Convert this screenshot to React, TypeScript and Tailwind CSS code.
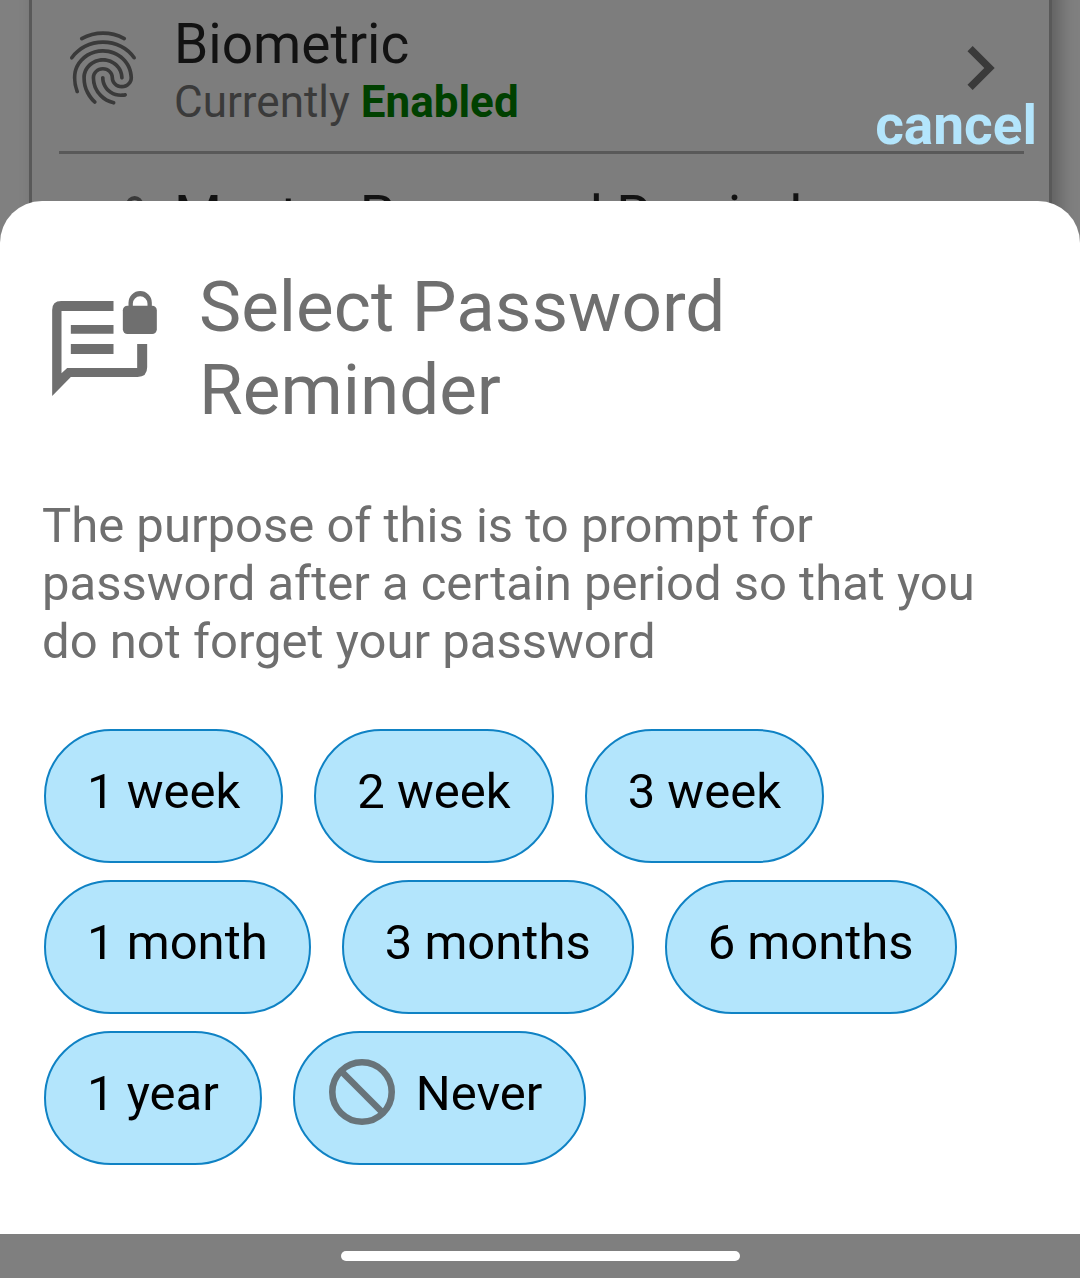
import type { ReactNode } from "react";
import { MdChevronRight, MdFingerprint } from "react-icons/md";

function ChatLockIcon({ className }: { className: string }) {
  return (
    <svg viewBox="65 63 314 315" className={className} fill="currentColor" aria-hidden="true">
      <path d="M65 378V120Q65 93 92 93H249V123H93V310L110 294H320V222H350V292Q350 321 321 321H121Z" />
      <path d="M121 165H249V191H121ZM121 222H249V252H121Z" />
      <rect x="277" y="107" width="102" height="85" rx="14" />
      <path d="M294 110V98A35 35 0 0 1 364 98V110H351V101A22 22 0 0 0 307 101V110Z" />
    </svg>
  );
}

function BanIcon() {
  return (
    <svg viewBox="0 0 20 20" className="mb-1 size-[66px] text-[#68747a]" fill="none" stroke="currentColor" strokeWidth="2" aria-hidden="true">
      <circle cx="10" cy="10" r="9" />
      <path d="M3.8 3.8 16.2 16.2" />
    </svg>
  );
}

function SettingRow({ icon, title, children }: { icon: ReactNode; title: string; children?: ReactNode }) {
  return (
    <div className="flex h-[172px] items-start pr-[25px] pl-[27px] pt-3 text-[#3a3a3a]">
      <div className="flex w-[115px] shrink-0 pt-3">{icon}</div>
      <div className="grow">
        <div className="text-[55px] leading-[64px] whitespace-nowrap text-[#121212]">{title}</div>
        {children}
      </div>
      <MdChevronRight className="mt-3 size-[88px] shrink-0" />
    </div>
  );
}

function Chip({ icon, label }: { icon?: ReactNode; label: string }) {
  return (
    <button
      type="button"
      className={
        "flex h-[134px] items-center rounded-full border-2 border-[#0f82c4] bg-[#b3e5fc] pb-2 text-[49px] leading-[58px] text-black " +
        (icon ? "gap-[21px] pl-[34px] pr-[42px]" : "px-[41px]")
      }
    >
      {icon}
      {label}
    </button>
  );
}

const rows = [["1 week", "2 week", "3 week"], ["1 month", "3 months", "6 months"], ["1 year", "Never"]];

export default function App() {
  return (
    <div className="relative min-h-screen overflow-hidden bg-[#808080] font-['Roboto',sans-serif]">
      <div className="absolute inset-x-0 -top-10 bottom-0 pr-7 pl-[29px]" aria-hidden="true">
        <div className="h-full border-x-[3px] border-[#595959] bg-[#7d7d7d] pt-10 shadow-[8px_0_16px_0_rgba(0,0,0,0.25)]">
          <SettingRow icon={<MdFingerprint className="size-[88px]" />} title="Biometric">
            <div className="text-[44px] leading-[52px]">
              Currently <b className="font-bold text-[#004000]">Enabled</b>
            </div>
          </SettingRow>
          <hr className="-mt-[21px] mr-[25px] mb-[18px] ml-[27px] border-t-[3px] border-[#595959]" />
          <SettingRow icon={<ChatLockIcon className="ml-[11px] size-[77px]" />} title="Master Password Reminder" />
        </div>
      </div>

      <div className="relative flex min-h-screen flex-col justify-end">
        <div className="flex justify-end px-[43px] pb-11">
          <button type="button" className="text-[55px] leading-[64px] font-bold text-[#b3e5fc]">
            cancel
          </button>
        </div>
        <section className="rounded-t-[42px] bg-white px-[42px] pt-16 pb-[69px] text-[#6f6f6f]">
          <div className="flex items-start gap-[42px]">
            <ChatLockIcon className="mt-[26px] ml-[10px] size-[105px] shrink-0" />
            <h1 className="max-w-[640px] text-[71px] leading-[83px]">Select Password Reminder</h1>
          </div>
          <p className="mt-[66px] text-[49px] leading-[58px]">
            The purpose of this is to prompt for password after a certain period so that you do not forget your password
          </p>
          <div className="mt-[58px] ml-[2px] flex flex-col gap-[17px]">
            {rows.map((row) => (
              <div key={row[0]} className="flex flex-wrap gap-[31px]">
                {row.map((label) => (
                  <Chip key={label} label={label} icon={label === "Never" ? <BanIcon /> : undefined} />
                ))}
              </div>
            ))}
          </div>
        </section>
        <div className="flex h-11 items-center justify-center bg-[#7f7f7f]">
          <div className="h-[10px] w-[399px] rounded-full bg-white" />
        </div>
      </div>
    </div>
  );
}
